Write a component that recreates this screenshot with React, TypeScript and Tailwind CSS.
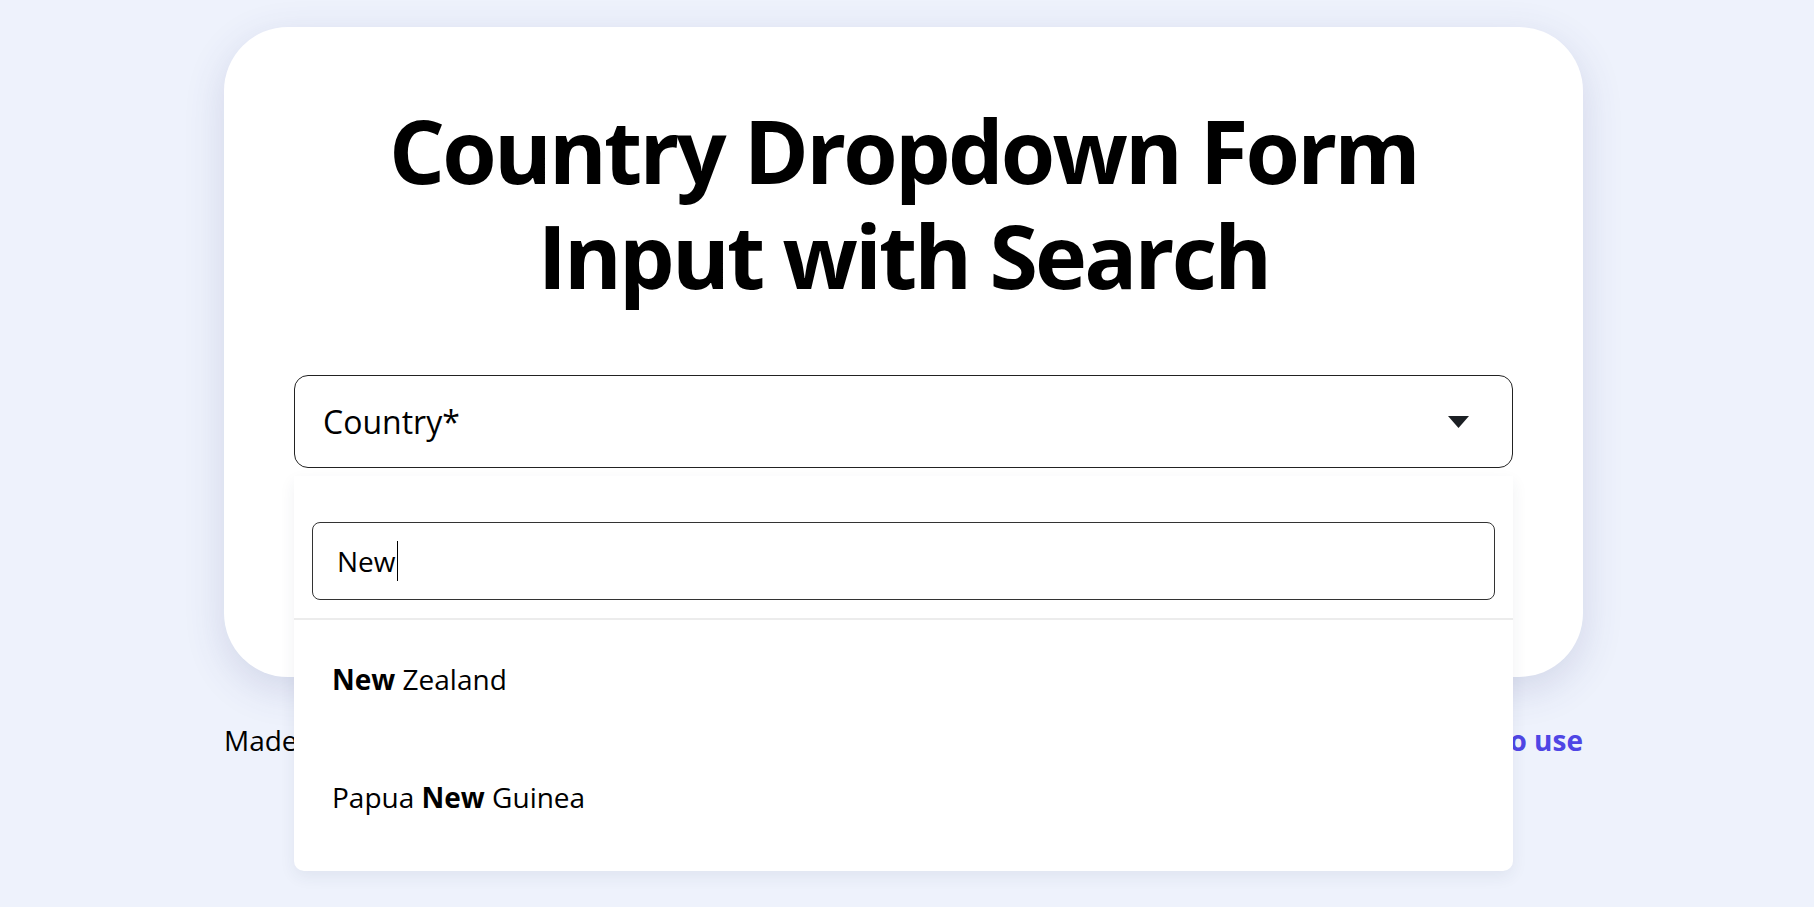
import React from "react";

const results = [
  { before: "", match: "New", after: " Zealand" },
  { before: "Papua ", match: "New", after: " Guinea" },
];

const App = () => {
  return (
    <div className="min-h-screen bg-[#eef2fc] font-['Open_Sans',sans-serif] text-black flex flex-col items-center pt-[27px] pr-[7px]">
      <div className="w-[1359px] bg-white rounded-[64px] px-[70px] pt-[71px] pb-[70px] shadow-[0_12px_40px_rgba(60,70,130,0.16)]">
        <h1 className="text-center text-[88px] leading-[105px] font-bold tracking-[-0.032em]">
          Country Dropdown Form
          <br />
          Input with Search
        </h1>

        <div className="relative mt-[67px]">
          <button className="w-full h-[93px] flex items-center justify-between border border-[#222] rounded-[14px] pl-[28px] pr-[43px] text-[32px] text-left">
            <span>Country*</span>
            <svg width="21" height="12" viewBox="0 0 21 12">
              <path d="M0 0h21L10.5 12z" fill="#1b1f23" />
            </svg>
          </button>

          <div className="h-[139px] pt-[50px]">
            <button className="w-full h-[80px] rounded-[14px] bg-[#4f46e5] text-white text-[28px] font-bold">
              Submit
            </button>
          </div>

          <div className="absolute left-0 right-0 top-[101px] z-10 bg-white rounded-b-[10px] shadow-[0_6px_16px_rgba(40,50,90,0.07)]">
            <div className="pt-[46px] px-[18px] pb-[18px] border-b-2 border-[#ececec]">
              <div className="h-[78px] border border-[#333] rounded-[8px] flex items-center pl-[24px] text-[28px]">
                <span>New</span>
                <span className="w-px h-[40px] bg-black ml-px" />
              </div>
            </div>
            <ul className="pb-[15px]">
              {results.map((r) => (
                <li
                  key={r.before + r.after}
                  className="h-[118px] flex items-center px-[38px] text-[28px] whitespace-pre"
                >
                  {r.before}
                  <b className="font-bold">{r.match}</b>
                  {r.after}
                </li>
              ))}
            </ul>
          </div>
        </div>
      </div>

      <div className="w-[1359px] mt-[42px] flex justify-between text-[28px]">
        <span>Made with love by a front-end dev</span>
        <a className="font-bold text-[#4f46e5]">How to use</a>
      </div>
    </div>
  );
};

export default App;
